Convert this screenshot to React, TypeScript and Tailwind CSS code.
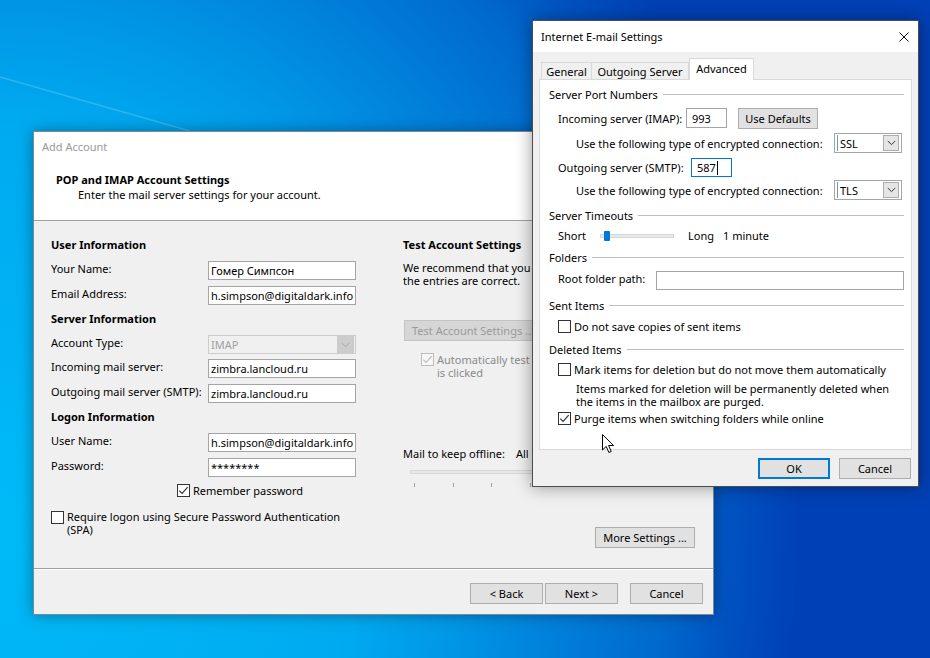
import React from "react";

function Chevron({ color = "#333333" }: { color?: string }) {
  return (
    <svg width="9" height="6" viewBox="0 0 9 6">
      <path d="M0.8 1 L4.5 4.6 L8.2 1" fill="none" stroke={color} strokeWidth="1" />
    </svg>
  );
}

function CheckBox({ checked, disabled }: { checked?: boolean; disabled?: boolean }) {
  return (
    <span
      className={
        disabled
          ? "flex h-[13px] w-[13px] shrink-0 items-center justify-center border border-[#bcbcbc] bg-[#f7f7f7]"
          : "flex h-[13px] w-[13px] shrink-0 items-center justify-center border border-[#333333] bg-white"
      }
    >
      {checked && (
        <svg width="11" height="11" viewBox="0 0 11 11">
          <path
            d="M1.3 5.6 L4.1 8.4 L9.7 2.2"
            fill="none"
            stroke={disabled ? "#bcbcbc" : "#333333"}
            strokeWidth="1.2"
          />
        </svg>
      )}
    </span>
  );
}

function TextBox({ value }: { value: string }) {
  return (
    <div className="flex h-[19px] w-[148px] items-center overflow-hidden whitespace-nowrap border border-[#a5a5a5] bg-white pl-[2px] leading-[15px]">
      {value}
    </div>
  );
}

function FormRow({ label, value }: { label: string; value: string }) {
  return (
    <div className="flex h-[19px] items-start">
      <div className="w-[157px] whitespace-nowrap leading-[15px]">{label}</div>
      <TextBox value={value} />
    </div>
  );
}

function WinButton({ label, w }: { label: string; w: string }) {
  return (
    <div className={`flex h-[21px] ${w} items-center justify-center border border-[#adadad] bg-[#e1e1e1] leading-[15px]`}>
      {label}
    </div>
  );
}

function GroupHeader({ label, mt }: { label: string; mt: string }) {
  return (
    <div className={`flex h-[15px] items-center ${mt}`}>
      <span className="whitespace-nowrap leading-[15px]">{label}</span>
      <span className="ml-[5px] h-px flex-1 bg-[#bdbdbd]" />
    </div>
  );
}

function ComboBox({ value }: { value: string }) {
  return (
    <div className="flex h-[20px] w-[68px] items-center border border-[#a5a5a5] bg-white">
      <span className="ml-[2px] h-[16px] w-px bg-[#6f95c4]" />
      <span className="flex-1 pl-[2px] leading-[15px]">{value}</span>
      <span className="mr-[2px] flex h-[16px] w-[16px] items-center justify-center border border-[#adadad] bg-[#e5e5e5]">
        <Chevron />
      </span>
    </div>
  );
}

function AddAccount() {
  return (
    <div className="absolute left-[33px] top-[131px] flex h-[484px] w-[681px] flex-col border border-[#7a8a99] bg-[#f0f0f0] shadow-[0_0_14px_rgba(0,0,0,0.35)]">
      <div className="flex h-[30px] items-center bg-white pl-[8px] text-[#999999]">Add Account</div>
      <div className="h-[59px] border-b border-[#a0a0a0] bg-white pl-[22px] pt-[10px] leading-[15px]">
        <div className="font-bold">POP and IMAP Account Settings</div>
        <div className="pl-[22px]">Enter the mail server settings for your account.</div>
      </div>
      <div className="flex h-[347px] pl-[17px]">
        <div className="flex w-[352px] flex-col">
          <div className="mt-[16px] h-[15px] font-bold leading-[15px]">User Information</div>
          <div className="mt-[9px]">
            <FormRow label="Your Name:" value="Гомер Симпсон" />
          </div>
          <div className="mt-[6px]">
            <FormRow label="Email Address:" value="h.simpson@digitaldark.info" />
          </div>
          <div className="mt-[6px] h-[15px] font-bold leading-[15px]">Server Information</div>
          <div className="mt-[9px] flex h-[19px] items-start">
            <div className="w-[157px] leading-[15px]">Account Type:</div>
            <div className="flex h-[19px] w-[148px] items-center border border-[#cccccc] bg-[#f0f0f0] pl-[2px] text-[#a0a0a0]">
              <span className="flex-1 leading-[15px]">IMAP</span>
              <span className="mr-px flex h-[17px] w-[17px] items-center justify-center bg-[#cccccc]">
                <Chevron color="#a8a8a8" />
              </span>
            </div>
          </div>
          <div className="mt-[5px]">
            <FormRow label="Incoming mail server:" value="zimbra.lancloud.ru" />
          </div>
          <div className="mt-[6px]">
            <FormRow label="Outgoing mail server (SMTP):" value="zimbra.lancloud.ru" />
          </div>
          <div className="mt-[6px] h-[15px] font-bold leading-[15px]">Logon Information</div>
          <div className="mt-[9px]">
            <FormRow label="User Name:" value="h.simpson@digitaldark.info" />
          </div>
          <div className="mt-[6px]">
            <FormRow label="Password:" value="********" />
          </div>
          <div className="mt-[7px] flex h-[13px] items-center pl-[126px]">
            <CheckBox checked />
            <span className="ml-[3px] whitespace-nowrap leading-[15px]">Remember password</span>
          </div>
          <div className="mt-[14px] flex items-start">
            <CheckBox />
            <span className="ml-[3px] mt-[-1px] leading-[13px]">
              Require logon using Secure Password Authentication
              <br />
              (SPA)
            </span>
          </div>
        </div>
        <div className="flex flex-1 flex-col pr-[18px]">
          <div className="mt-[16px] h-[15px] font-bold leading-[15px]">Test Account Settings</div>
          <div className="mt-[9px] w-[129px] overflow-hidden whitespace-nowrap leading-[13px]">
            We recommend that you test your account to ensure that
            <br />
            the entries are correct.
          </div>
          <div className="ml-px mt-[33px] w-[128px] overflow-hidden">
            <div className="flex h-[21px] w-[170px] items-center whitespace-nowrap border border-[#c4c4c4] bg-[#d6d6d6] pl-[7px] leading-[15px] text-[#9a9a9a]">
              Test Account Settings ...
            </div>
          </div>
          <div className="mt-[12px] flex w-[129px] items-start overflow-hidden pl-[18px]">
            <CheckBox checked disabled />
            <span className="ml-[3px] whitespace-nowrap leading-[13px] text-[#8a8a8a]">
              Automatically test account settings when Next
              <br />
              is clicked
            </span>
          </div>
          <div className="mt-[67px] flex h-[15px] whitespace-nowrap leading-[15px]">
            <span className="w-[113px]">Mail to keep offline:</span>
            <span>All</span>
          </div>
          <div className="ml-[7px] mt-[9px] h-[4px] w-[280px] border border-[#d6d6d6] bg-[#e7eaea]" />
          <div className="ml-[11px] mt-[9px] flex w-[271px] justify-between">
            {[0, 1, 2, 3, 4, 5, 6, 7].map((i) => (
              <span key={i} className="h-[4px] w-px bg-[#a0a0a0]" />
            ))}
          </div>
          <div className="mb-[20px] mt-auto flex justify-end">
            <WinButton label="More Settings ..." w="w-[100px]" />
          </div>
        </div>
      </div>
      <div className="h-[2px] border-t border-[#a0a0a0] bg-white" />
      <div className="flex h-[44px] justify-end pr-[10px] pt-[13px]">
        <WinButton label="< Back" w="w-[73px]" />
        <div className="ml-[2px]">
          <WinButton label="Next >" w="w-[73px]" />
        </div>
        <div className="ml-[12px]">
          <WinButton label="Cancel" w="w-[73px]" />
        </div>
      </div>
    </div>
  );
}

function EmailSettings() {
  return (
    <div className="absolute left-[532px] top-[20px] flex h-[467px] w-[387px] flex-col border border-[#4d4d4d] bg-[#f0f0f0] shadow-[0_0_16px_rgba(0,0,0,0.4)]">
      <div className="flex h-[31px] items-center justify-between bg-white pl-[8px] pr-[9px]">
        <span className="leading-[15px]">Internet E-mail Settings</span>
        <svg width="10" height="10" viewBox="0 0 10 10">
          <path d="M0.5 0.5 L9.5 9.5 M9.5 0.5 L0.5 9.5" stroke="#111111" strokeWidth="1" />
        </svg>
      </div>
      <div className="flex flex-1 flex-col px-[6px] pt-[6px]">
        <div className="relative z-10 flex h-[21px] items-end pl-[2px]">
          <div className="flex h-[17px] w-[51px] items-center justify-center border-x border-t border-[#d9d9d9] leading-[15px]">
            General
          </div>
          <div className="flex h-[17px] w-[97px] items-center justify-center border-r border-t border-[#d9d9d9] leading-[15px]">
            Outgoing Server
          </div>
          <div className="-mb-px flex h-[22px] w-[65px] items-center justify-center border-x border-t border-[#d9d9d9] bg-white pb-[2px] leading-[15px]">
            Advanced
          </div>
        </div>
        <div className="flex h-[371px] flex-col border border-[#d9d9d9] bg-white pl-[9px] pr-[7px]">
          <GroupHeader label="Server Port Numbers" mt="mt-[7px]" />
          <div className="mt-[6px] flex h-[20px] items-center pl-[9px]">
            <span className="w-[128px] whitespace-nowrap leading-[15px]">Incoming server (IMAP):</span>
            <div className="flex h-[20px] w-[41px] items-center border border-[#a5a5a5] bg-white pl-[5px] leading-[15px]">
              993
            </div>
            <div className="ml-[11px]">
              <WinButton label="Use Defaults" w="w-[80px]" />
            </div>
          </div>
          <div className="mt-[5px] flex h-[20px] items-center pl-[27px]">
            <span className="w-[258px] whitespace-nowrap leading-[15px]">
              Use the following type of encrypted connection:
            </span>
            <ComboBox value="SSL" />
          </div>
          <div className="mt-[5px] flex h-[19px] items-center pl-[9px]">
            <span className="w-[133px] whitespace-nowrap leading-[15px]">Outgoing server (SMTP):</span>
            <div className="flex h-[19px] w-[41px] items-center border border-[#0078d7] bg-white pl-[5px] leading-[15px]">
              587
              <span className="ml-px h-[14px] w-px bg-black" />
            </div>
          </div>
          <div className="mt-[3px] flex h-[20px] items-center pl-[27px]">
            <span className="w-[258px] whitespace-nowrap leading-[15px]">
              Use the following type of encrypted connection:
            </span>
            <ComboBox value="TLS" />
          </div>
          <GroupHeader label="Server Timeouts" mt="mt-[8px]" />
          <div className="mt-[5px] flex h-[15px] items-center pl-[9px] leading-[15px]">
            <span className="w-[42px]">Short</span>
            <div className="relative h-[15px] w-[74px]">
              <div className="absolute left-0 right-0 top-[6px] h-[4px] border border-[#d6d6d6] bg-[#e7eaea]" />
              <div className="absolute left-[4px] top-[3px] h-[10px] w-[6px] rounded-[1px] bg-[#0078d7]" />
            </div>
            <span className="ml-[14px] w-[35px]">Long</span>
            <span>1 minute</span>
          </div>
          <GroupHeader label="Folders" mt="mt-[7px]" />
          <div className="mt-[6px] flex h-[19px] items-start pl-[9px]">
            <span className="w-[98px] whitespace-nowrap leading-[15px]">Root folder path:</span>
            <div className="h-[19px] flex-1 border border-[#a5a5a5] bg-white" />
          </div>
          <GroupHeader label="Sent Items" mt="mt-[8px]" />
          <div className="mt-[6px] flex h-[15px] items-center pl-[9px]">
            <CheckBox />
            <span className="ml-[3px] whitespace-nowrap leading-[15px]">Do not save copies of sent items</span>
          </div>
          <GroupHeader label="Deleted Items" mt="mt-[8px]" />
          <div className="mt-[5px] flex h-[15px] items-center pl-[9px]">
            <CheckBox />
            <span className="ml-[3px] whitespace-nowrap leading-[15px]">
              Mark items for deletion but do not move them automatically
            </span>
          </div>
          <div className="mt-[5px] whitespace-nowrap pl-[27px] leading-[13px]">
            Items marked for deletion will be permanently deleted when
            <br />
            the items in the mailbox are purged.
          </div>
          <div className="mt-[3px] flex h-[15px] items-center pl-[9px]">
            <CheckBox checked />
            <span className="ml-[3px] whitespace-nowrap leading-[15px]">
              Purge items when switching folders while online
            </span>
          </div>
        </div>
        <div className="mr-px mt-[8px] flex justify-end gap-[9px]">
          <div className="flex h-[21px] w-[72px] items-center justify-center border-2 border-[#0078d7] bg-[#e1e1e1] leading-[15px]">
            OK
          </div>
          <WinButton label="Cancel" w="w-[72px]" />
        </div>
      </div>
    </div>
  );
}

export default function App() {
  return (
    <div className="relative h-[658px] w-[930px] overflow-hidden bg-[#0040b6] bg-[radial-gradient(800px_900px_at_0%_80%,#00baf8_0%,#00aaf0_45%,#0096e6_58%,#0068cc_84%,#0050c0_92%,#0040b6_100%)] font-['Noto_Sans',sans-serif] text-[11px] text-black">
      <svg className="absolute inset-0" width="930" height="658" viewBox="0 0 930 658">
        <line x1="0" y1="77" x2="190" y2="131" stroke="rgba(255,255,255,0.18)" strokeWidth="1.5" />
      </svg>
      <AddAccount />
      <EmailSettings />
      <svg className="absolute left-[601px] top-[433px]" width="14" height="21" viewBox="0 0 14 21">
        <path
          d="M1.5 1.5 L1.5 17 L5.2 13.4 L7.9 19.5 L10.2 18.5 L7.6 12.5 L12.6 12.5 Z"
          fill="white"
          stroke="black"
          strokeWidth="1"
          strokeLinejoin="round"
        />
      </svg>
    </div>
  );
}
